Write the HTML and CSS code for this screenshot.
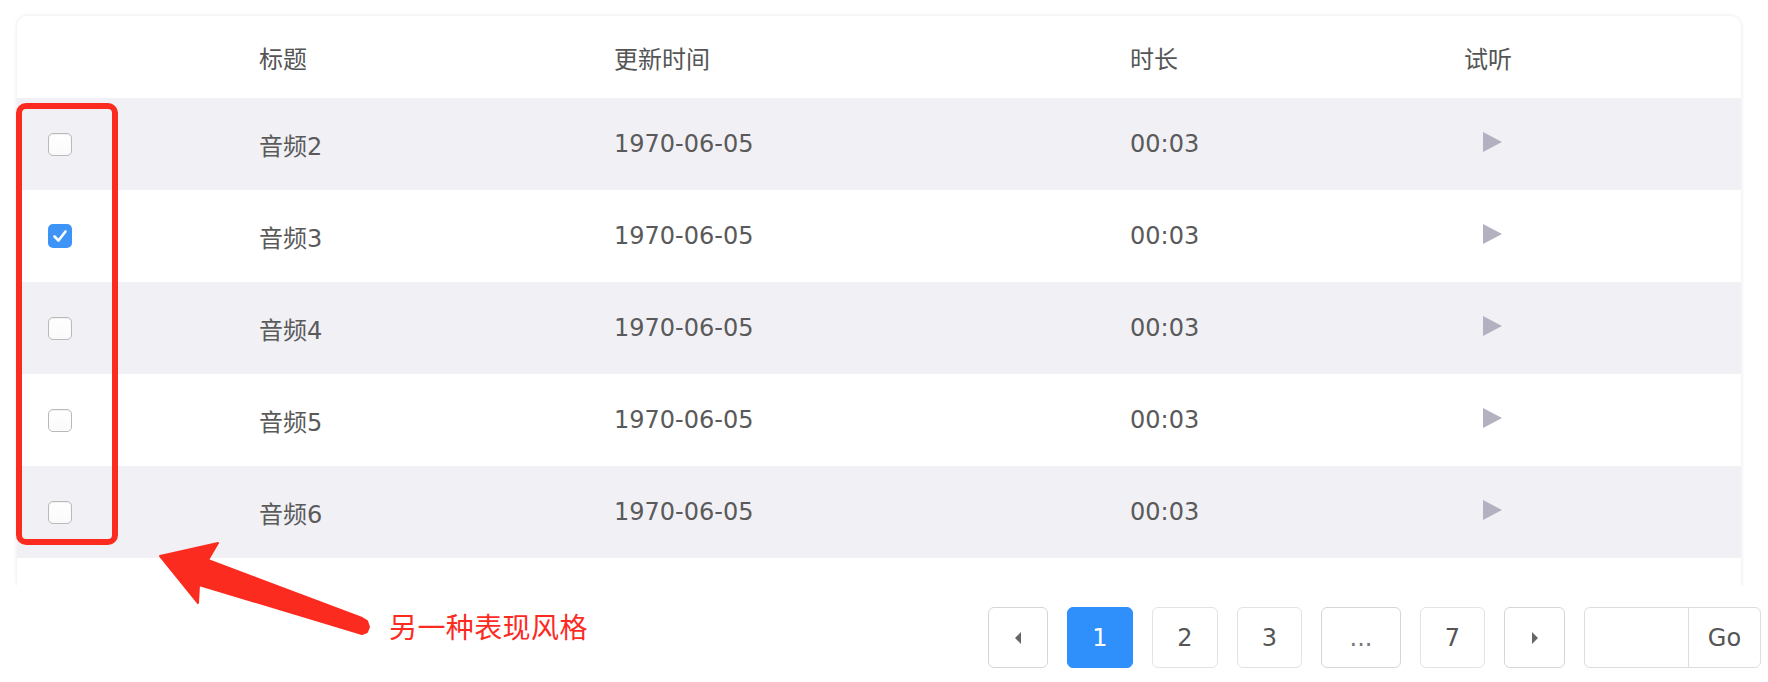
FILE: index.html
```html
<!DOCTYPE html>
<html lang="zh-CN">
<head>
<meta charset="utf-8">
<title>音频列表</title>
<link rel="stylesheet" href="styles.css">
</head>
<body>
<div class="page">
  <div class="card">
    <div class="row head">
      <div class="cell c-check"></div>
      <div class="cell">标题</div>
      <div class="cell">更新时间</div>
      <div class="cell">时长</div>
      <div class="cell">试听</div>
    </div>
    <div class="row alt">
      <div class="cell c-check"><span class="cb"></span></div>
      <div class="cell">音频2</div>
      <div class="cell">1970-06-05</div>
      <div class="cell">00:03</div>
      <div class="cell c-play"><span class="play"></span></div>
    </div>
    <div class="row">
      <div class="cell c-check"><span class="cb checked"><svg viewBox="0 0 24 24" width="24" height="24"><path d="M6.5 12.5 L10.5 16.5 L17.5 7.5" fill="none" stroke="#fff" stroke-width="2.6" stroke-linecap="round" stroke-linejoin="round"/></svg></span></div>
      <div class="cell">音频3</div>
      <div class="cell">1970-06-05</div>
      <div class="cell">00:03</div>
      <div class="cell c-play"><span class="play"></span></div>
    </div>
    <div class="row alt">
      <div class="cell c-check"><span class="cb"></span></div>
      <div class="cell">音频4</div>
      <div class="cell">1970-06-05</div>
      <div class="cell">00:03</div>
      <div class="cell c-play"><span class="play"></span></div>
    </div>
    <div class="row">
      <div class="cell c-check"><span class="cb"></span></div>
      <div class="cell">音频5</div>
      <div class="cell">1970-06-05</div>
      <div class="cell">00:03</div>
      <div class="cell c-play"><span class="play"></span></div>
    </div>
    <div class="row alt">
      <div class="cell c-check"><span class="cb"></span></div>
      <div class="cell">音频6</div>
      <div class="cell">1970-06-05</div>
      <div class="cell">00:03</div>
      <div class="cell c-play"><span class="play"></span></div>
    </div>
  </div>

  <div class="footer">
    <div class="note">另一种表现风格</div>
    <div class="pager">
      <span class="pg pg-nav pg-prev"><span class="caret caret-left"></span></span>
      <span class="pg pg-num pg-wide active">1</span>
      <span class="pg pg-num pg-wide">2</span>
      <span class="pg pg-num">3</span>
      <span class="pg pg-more">...</span>
      <span class="pg pg-num">7</span>
      <span class="pg pg-nav pg-next"><span class="caret caret-right"></span></span>
      <span class="jump"><span class="jump-input"></span><span class="jump-go">Go</span></span>
    </div>
  </div>

  <div class="highlight"></div>
  <svg class="arrow" viewBox="0 0 400 682" width="400" height="682">
    <polygon points="160,556 218,543 208,560 362,618 367,621 369,627 367,632 362,634 199,585 198,603" fill="#fc2b1f" stroke="#fc2b1f" stroke-width="2" stroke-linejoin="round"/>
  </svg>
</div>
</body>
</html>
```

FILE: styles.css
```css
html, body {
  margin: 0;
  padding: 0;
  background: #ffffff;
}

body {
  font-family: "DejaVu Sans", "Noto Sans CJK SC", sans-serif;
  color: #555555;
}

.page {
  position: relative;
  width: 1768px;
  height: 682px;
  overflow: hidden;
  padding-top: 16px;
  box-sizing: border-box;
}

.card {
  margin-left: 17px;
  width: 1724px;
  height: 570px;
  background: #ffffff;
  border-radius: 10px 10px 0 0;
  box-shadow: 0 0 4px rgba(0, 0, 0, 0.10);
  clip-path: inset(-8px -8px 0 -8px);
  overflow: hidden;
}

.row {
  display: grid;
  grid-template-columns: 242px 355px 516px 334px 1fr;
  height: 92px;
  align-items: center;
  font-size: 24px;
  color: #5a5a5a;
}

.row.head {
  height: 82px;
  color: #555555;
}

.row.alt {
  background: #f1f0f5;
}

.cell {
  white-space: nowrap;
}

.c-check {
  padding-left: 31px;
  display: flex;
  align-items: center;
}

.cb {
  display: block;
  width: 24px;
  height: 23px;
  box-sizing: border-box;
  border: 1px solid #b9b9b9;
  border-radius: 5px;
  background: linear-gradient(#ffffff, #fafafa);
  box-shadow: inset 0 1px 1px rgba(0, 0, 0, 0.06);
}

.cb.checked {
  border: none;
  height: 24px;
  background: #3d93f6;
  box-shadow: none;
}

.cb.checked svg {
  display: block;
}

.c-play {
  padding-left: 19px;
  display: flex;
  align-items: center;
}

.play {
  display: block;
  width: 0;
  height: 0;
  border-left: 19px solid #b3b1c0;
  border-top: 10.5px solid transparent;
  border-bottom: 10.5px solid transparent;
  margin-top: -5px;
}

.footer {
  display: flex;
  align-items: flex-start;
  margin-top: 21px;
  padding-left: 389px;
  padding-right: 7px;
}

.note {
  margin-top: 5px;
  font-family: "Noto Sans CJK SC", sans-serif;
  font-size: 28px;
  line-height: 28px;
  color: #fc2b1f;
  letter-spacing: 0.4px;
}

.pager {
  margin-left: auto;
  display: flex;
  gap: 19px;
}

.pg {
  display: flex;
  align-items: center;
  justify-content: center;
  height: 61px;
  box-sizing: border-box;
  border: 1px solid #e3e3e3;
  border-radius: 6px;
  background: #ffffff;
  font-size: 24px;
  color: #555555;
}

.pg-num {
  width: 65px;
}

.pg-num.pg-wide {
  width: 66px;
}

.pg-nav {
  border-color: #d6d6d6;
}

.pg-prev {
  width: 60px;
}

.pg-next {
  width: 61px;
}

.pg-more {
  width: 80px;
  border-color: #d6d6d6;
  color: #777777;
}

.pg.active {
  background: #2f8ffb;
  border-color: #2f8ffb;
  color: #ffffff;
}

.caret {
  display: block;
  width: 0;
  height: 0;
  border-top: 6px solid transparent;
  border-bottom: 6px solid transparent;
}

.caret-left {
  border-right: 6px solid #666666;
}

.caret-right {
  border-left: 6px solid #666666;
}

.jump {
  display: flex;
  width: 177px;
  height: 61px;
  box-sizing: border-box;
  border: 1px solid #dddddd;
  border-radius: 6px;
  overflow: hidden;
}

.jump-input {
  width: 103px;
  border-right: 1px solid #dddddd;
}

.jump-go {
  flex: 1;
  display: flex;
  align-items: center;
  justify-content: center;
  font-size: 24px;
  color: #555555;
}

.highlight {
  position: absolute;
  left: 16px;
  top: 103px;
  width: 102px;
  height: 442px;
  box-sizing: border-box;
  border: 6px solid #fc2b1f;
  border-radius: 10px;
  pointer-events: none;
}

.arrow {
  position: absolute;
  left: 0;
  top: 0;
  pointer-events: none;
}
```
